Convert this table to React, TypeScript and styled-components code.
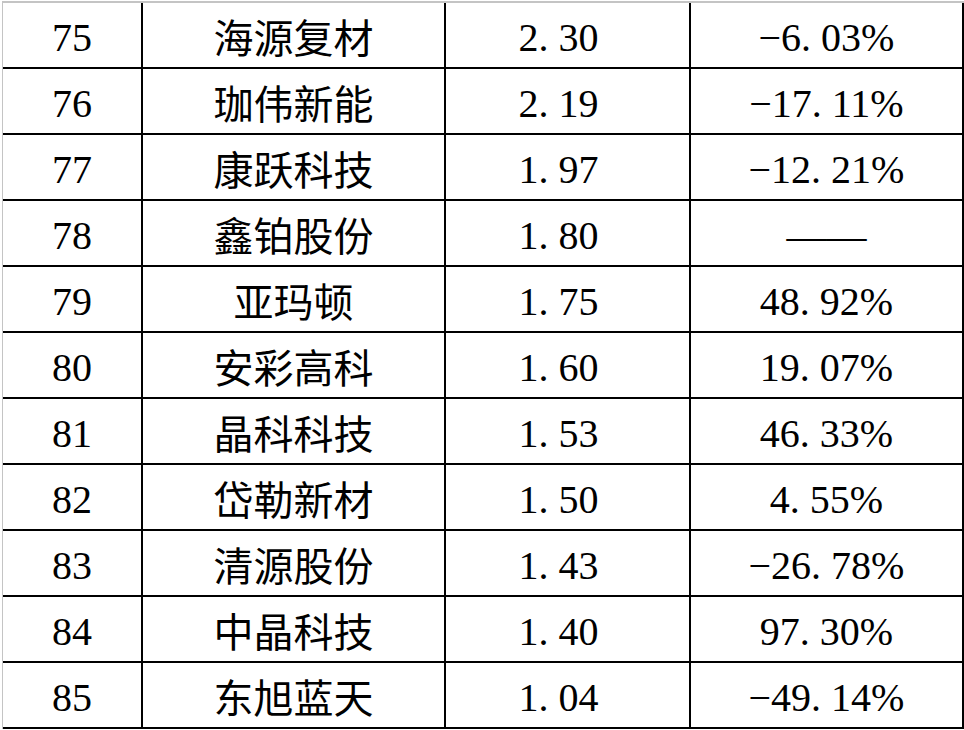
import * as React from 'react';
import styled, { createGlobalStyle } from 'styled-components';

interface RowData {
  rank: number;
  name: string;
  value: string;
  change: string;
}

const rows: RowData[] = [
  { rank: 75, name: '海源复材', value: '2. 30', change: '−6. 03%' },
  { rank: 76, name: '珈伟新能', value: '2. 19', change: '−17. 11%' },
  { rank: 77, name: '康跃科技', value: '1. 97', change: '−12. 21%' },
  { rank: 78, name: '鑫铂股份', value: '1. 80', change: '——' },
  { rank: 79, name: '亚玛顿', value: '1. 75', change: '48. 92%' },
  { rank: 80, name: '安彩高科', value: '1. 60', change: '19. 07%' },
  { rank: 81, name: '晶科科技', value: '1. 53', change: '46. 33%' },
  { rank: 82, name: '岱勒新材', value: '1. 50', change: '4. 55%' },
  { rank: 83, name: '清源股份', value: '1. 43', change: '−26. 78%' },
  { rank: 84, name: '中晶科技', value: '1. 40', change: '97. 30%' },
  { rank: 85, name: '东旭蓝天', value: '1. 04', change: '−49. 14%' },
];

const GlobalStyle = createGlobalStyle`
  html, body {
    margin: 0;
    padding: 0;
    background: #fff;
  }
  body {
    font-family: "Liberation Serif", "Noto Sans CJK SC", serif;
    color: #000;
  }
`;

const Sheet = styled.div`
  margin: 1px 0 0 2px;
  border-top: 2px solid #c4c4c4;
  border-left: 1px solid #c4c4c4;
  width: 962px;
  box-sizing: border-box;
`;

const Row = styled.div`
  display: grid;
  grid-template-columns: 140px 303px 245px 273px;
  height: 66px;
`;

const Cell = styled.div<{ $shift?: number }>`
  box-sizing: border-box;
  border-right: 2px solid #000;
  border-bottom: 2px solid #000;
  display: flex;
  align-items: center;
  justify-content: center;
  padding-top: 6px;
  padding-right: ${p => p.$shift ?? 0}px;
  font-family: "Liberation Serif", "Noto Sans CJK SC", serif;
  font-size: 40px;
  line-height: 1;
  white-space: pre;
`;

const NameCell = styled(Cell)`
  padding-top: 1px;
  font-family: "Noto Sans CJK SC", sans-serif;
`;

export default function App() {
  return (
    <>
      <GlobalStyle />
      <Sheet>
        {rows.map(r => (
          <Row key={r.rank}>
            <Cell>{r.rank}</Cell>
            <NameCell>{r.name}</NameCell>
            <Cell $shift={18}>{r.value}</Cell>
            <Cell>{r.change}</Cell>
          </Row>
        ))}
      </Sheet>
    </>
  );
}
